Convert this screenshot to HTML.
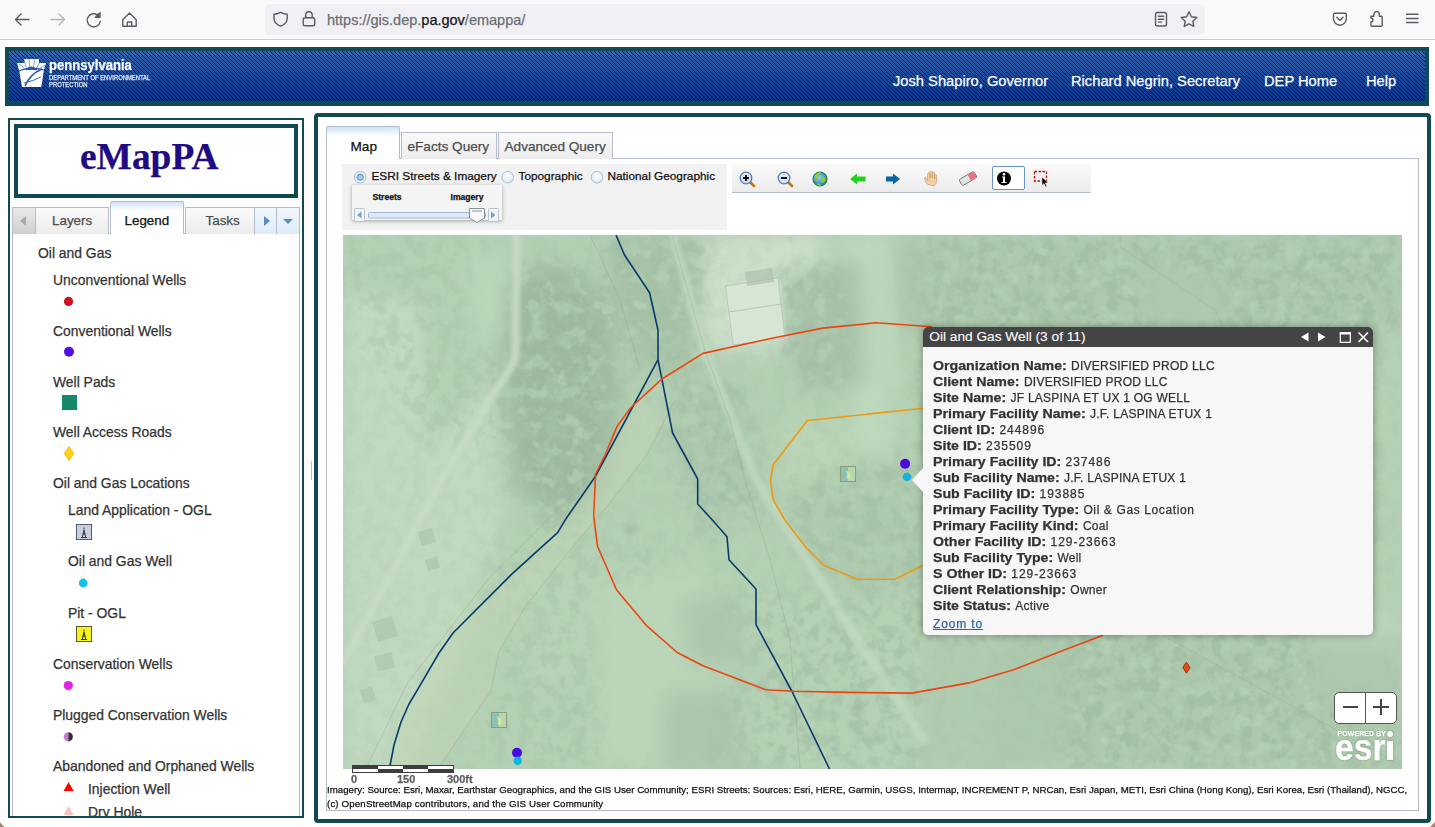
<!DOCTYPE html>
<html><head><meta charset="utf-8">
<style>
*{box-sizing:border-box;margin:0;padding:0}
html,body{width:1435px;height:827px;overflow:hidden;background:#fff;font-family:"Liberation Sans",sans-serif;position:relative}
.a{position:absolute}
.t{position:absolute;white-space:nowrap;line-height:1;-webkit-text-stroke:0.25px currentColor}
/* browser chrome */
#chrome{left:0;top:0;width:1435px;height:40px;background:#f9f9fb;border-bottom:1px solid #cbcbcd}
#url{left:265px;top:3.5px;width:940px;height:31px;background:#f0f0f4;border-radius:5px}
/* header */
#hdr{left:5px;top:47px;width:1424px;height:59px;border:4px solid #114a54;border-bottom-width:5px;
 background:linear-gradient(45deg,rgba(5,10,35,.75) 0 16%,transparent 16% 50%,rgba(5,10,35,.75) 50% 66%,transparent 66% 100%) 0 0/4px 4px,linear-gradient(#3163ab,#0a338c)}
.nav{color:#fff;font-size:14.7px;top:74px}
/* left panel */
#lp{left:8px;top:118px;width:296px;height:700px;border:2px solid #114a54;background:#fff}
#logo{left:14px;top:124px;width:284px;height:74px;border:4px solid #114a54;background:#fff}
#lcont{left:12px;top:233px;width:288px;height:583px;border:1px solid #b5bccb;border-bottom:none;background:#fff}
.ltab{top:207px;height:27px;border:1px solid #b5bccb;border-bottom:none;background:linear-gradient(#fafafa,#ececec);color:#4d4d4d;font-size:13.4px;text-align:center}
.leg{color:#333;font-size:13.9px}
/* right panel */
#rp{left:314px;top:113px;width:1117px;height:710px;border:4px solid #114a54;border-radius:4px;background:#fff}
#rcont{left:326px;top:158px;width:1093px;height:653px;border:1px solid #b5bccb;background:#fff}
.rtab{top:132px;height:27px;border:1px solid #b5bccb;border-bottom:none;background:linear-gradient(#fafafa,#ececec);color:#4d4d4d;font-size:13.6px}
#map{left:343px;top:235px;width:1059px;height:534px;overflow:hidden;background:#afcdae}
/* popup */
#pop{left:923px;top:327px;width:450px;height:308px;background:#f7f7f7;border-radius:5px;box-shadow:0 0 8px rgba(0,0,0,.35)}
#poph{left:0;top:0;width:450px;height:20px;background:#444;border-radius:5px 5px 0 0}
.pl{left:10px;color:#333;font-size:12px;letter-spacing:0.25px}
.pl b{display:inline-block;letter-spacing:0;transform:scaleX(1.18);transform-origin:0 0}
</style></head><body>
<!-- CHROME -->
<div id="chrome" class="a"></div>
<div id="url" class="a"></div>
<svg class="a" style="left:0;top:0" width="1435" height="39">
 <g fill="none" stroke="#5b5b66" stroke-width="1.4" stroke-linecap="round" stroke-linejoin="round">
  <path d="M29 19.5 H15.5 M21 14 L15.5 19.5 L21 25"/>
  <path d="M51 19.5 H64.5 M59 14 L64.5 19.5 L59 25" stroke="#b4b4bc"/>
  <path d="M99.5 17 A6.6 6.6 0 1 0 100.3 21.5"/>
  <path d="M122.8 19.8 L129.5 13 L136.2 19.8 V26.3 H122.8Z M127.3 26.3 V22 H131.7 V26.3"/>
  <path d="M280.6 12.3 C278 13.8 275.5 14.2 274 14.2 V18.5 C274 22.5 277.5 25 280.6 26.2 C283.7 25 287.2 22.5 287.2 18.5 V14.2 C285.7 14.2 283.2 13.8 280.6 12.3Z"/>
  <rect x="303.2" y="17.8" width="11.5" height="8" rx="1.8"/>
  <path d="M305.7 17.8 V15 A3.2 3.2 0 0 1 312.2 15 V17.8"/>
  <rect x="1155.5" y="12.5" width="11" height="13.5" rx="2"/>
  <path d="M1158.3 16.3 H1163.7 M1158.3 19.2 H1163.7 M1158.3 22.1 H1161.5"/>
  <path d="M1189 11.8 L1191.4 16.8 L1196.8 17.5 L1192.8 21.2 L1193.8 26.4 L1189 23.8 L1184.2 26.4 L1185.2 21.2 L1181.2 17.5 L1186.6 16.8Z"/>
  <path d="M1334.5 13.3 H1345.3 A1 1 0 0 1 1346.3 14.3 V18.8 A6.4 6.4 0 0 1 1333.5 18.8 V14.3 A1 1 0 0 1 1334.5 13.3Z M1336.8 17.3 L1339.9 20.3 L1343 17.3"/>
  <path d="M1370.9 16.2 H1373.9 V14.3 A2.7 2.7 0 0 1 1379.3 14.3 V16.2 H1381.2 A1 1 0 0 1 1382.2 17.2 V25.2 A1 1 0 0 1 1381.2 26.2 H1371.9 A1 1 0 0 1 1370.9 25.2 V22 A2 2 0 0 0 1370.9 18Z"/>
  <path d="M1406.5 14.3 H1418 M1406.5 18.5 H1418 M1406.5 22.5 H1418"/>
 </g>
 <path d="M99.5 12 V17.3 H94.5" fill="#5b5b66" stroke="none"/>
 <path d="M100.6 11.8 L100.6 18 L94.5 18Z" fill="#5b5b66"/>
</svg>
<div class="t" style="left:327px;top:12.5px;font-size:14.5px;color:#6d6d74">https://gis.dep.<span style="color:#15141a">pa.gov</span>/emappa/</div>

<!-- HEADER -->
<div id="hdr" class="a"></div>
<svg class="a" style="left:0;top:50px" width="60" height="40">
 <path d="M24.3 9 H39 V13 H46 L43.8 20.7 L41.3 37 H22 L19.2 20.7 L17 13 H24.3Z" fill="#fff"/>
 <g stroke="#2a5aa8" fill="none">
  <path d="M19 21 Q30 16 44 20" stroke-width="1.2"/>
  <path d="M25 36 Q30 24 42 19" stroke-width="1.6"/>
  <path d="M24 33 Q33 31 41 27" stroke-width="0.9"/>
  <path d="M27 20 L24 10 M30 19 L29 9 M33 19 L35 9 M36 19 L40 12 M25 19 L19 14 M38 20 L45 15" stroke-width="0.8" opacity=".7"/>
  <path d="M26 20 Q31 14 37 20" stroke-width="1.2" fill="#2a5aa8"/>
 </g>
</svg>
<div class="t" style="left:48.8px;top:58.2px;font-size:14.3px;font-weight:bold;color:#fff;transform:scaleX(0.915);transform-origin:0 0">pennsylvania</div>
<div class="t" style="left:49.3px;top:75.3px;font-size:6.6px;color:#e8eef8;transform:scaleX(0.89);transform-origin:0 0">DEPARTMENT OF ENVIRONMENTAL</div>
<div class="t" style="left:49.3px;top:82.1px;font-size:6.6px;color:#e8eef8;transform:scaleX(0.89);transform-origin:0 0">PROTECTION</div>
<div class="t nav" style="left:893px">Josh Shapiro, Governor</div>
<div class="t nav" style="left:1071px">Richard Negrin, Secretary</div>
<div class="t nav" style="left:1264px">DEP Home</div>
<div class="t nav" style="left:1366px">Help</div>

<!-- LEFT PANEL -->
<div id="lp" class="a"></div>
<div id="logo" class="a"></div>
<div class="t" style="left:80px;top:138px;font-family:'Liberation Serif',serif;font-weight:bold;font-size:37.4px;color:#1e0a82">eMapPA</div>
<div id="lcont" class="a"></div>
<!-- left tabs -->
<div class="a" style="left:12px;top:207px;width:24px;height:27px;border:1px solid #b5bccb;border-bottom:none;background:linear-gradient(#e9e9e9,#cfcfcf)"></div>
<div class="a" style="left:20px;top:216px;width:0;height:0;border-top:5px solid transparent;border-bottom:5px solid transparent;border-right:6px solid #a9a9a9"></div>
<div class="a ltab" style="left:35px;width:74px"></div>
<div class="t" style="left:52px;top:214.4px;font-size:13.4px;color:#4d4d4d">Layers</div>
<div class="a" style="left:110px;top:201px;width:74px;height:33px;border:1px solid #b5bccb;border-bottom:none;background:linear-gradient(#cfe3f7 0,#fff 9px);border-radius:2px 2px 0 0"></div>
<div class="a" style="left:111px;top:232px;width:72px;height:3px;background:#fff"></div>
<div class="t" style="left:124.5px;top:214.4px;font-size:13.4px;color:#111">Legend</div>
<div class="a ltab" style="left:185px;width:70px"></div>
<div class="t" style="left:205.5px;top:214.4px;font-size:13.4px;color:#4d4d4d">Tasks</div>
<div class="a" style="left:254px;top:207px;width:23px;height:27px;border:1px solid #b5bccb;border-bottom:none;background:linear-gradient(#f2f8fe,#dcebf9)"></div>
<div class="a" style="left:264px;top:216px;width:0;height:0;border-top:5px solid transparent;border-bottom:5px solid transparent;border-left:6px solid #5a8cc0"></div>
<div class="a" style="left:276px;top:207px;width:24px;height:27px;border:1px solid #b5bccb;border-bottom:none;background:linear-gradient(#f2f8fe,#dcebf9)"></div>
<div class="a" style="left:283px;top:219px;width:0;height:0;border-left:5px solid transparent;border-right:5px solid transparent;border-top:5px solid #5a8cc0"></div>
<!-- legend -->
<div class="a" style="left:0;top:0;width:300px;height:816px;overflow:hidden">
<div class="t" style="left:38px;top:246.9px;font-size:13.9px;color:#333">Oil and Gas</div>
<div class="t" style="left:53px;top:273.9px;font-size:13.9px;color:#333">Unconventional Wells</div>
<div class="t" style="left:53px;top:324.7px;font-size:13.9px;color:#333">Conventional Wells</div>
<div class="t" style="left:53px;top:375.7px;font-size:13.9px;color:#333">Well Pads</div>
<div class="t" style="left:53px;top:426.3px;font-size:13.9px;color:#333">Well Access Roads</div>
<div class="t" style="left:53px;top:477.2px;font-size:13.9px;color:#333">Oil and Gas Locations</div>
<div class="t" style="left:68px;top:504.0px;font-size:13.9px;color:#333">Land Application - OGL</div>
<div class="t" style="left:68px;top:555.2px;font-size:13.9px;color:#333">Oil and Gas Well</div>
<div class="t" style="left:68px;top:606.5px;font-size:13.9px;color:#333">Pit - OGL</div>
<div class="t" style="left:53px;top:657.8px;font-size:13.9px;color:#333">Conservation Wells</div>
<div class="t" style="left:53px;top:708.7px;font-size:13.9px;color:#333">Plugged Conservation Wells</div>
<div class="t" style="left:53px;top:760.0px;font-size:13.9px;color:#333">Abandoned and Orphaned Wells</div>
<div class="t" style="left:88px;top:782.6px;font-size:13.9px;color:#333">Injection Well</div>
<div class="t" style="left:88px;top:806.0px;font-size:13.9px;color:#333">Dry Hole</div>
<svg class="a" style="left:0;top:0" width="300" height="816">
 <circle cx="68.5" cy="301.4" r="4.6" fill="#d0101e"/>
 <circle cx="69" cy="351.8" r="5" fill="#5010e8"/>
 <rect x="62" y="395" width="15" height="15" fill="#16896c"/>
 <path d="M69 446.5 L73.8 453.5 L69 460.5 L64.2 453.5Z" fill="#ffd21a" stroke="#f2b000" stroke-width="0.8"/>
 <rect x="76.5" y="524.5" width="15" height="15" fill="#c9cfdb" stroke="#54596a" stroke-width="1"/>
 <path d="M84 527.5 v2 M82.3 537.5 L84 530 L85.7 537.5 M81 537.5 h6 M82.6 534 h2.8" stroke="#33384a" stroke-width="1" fill="none"/>
 <circle cx="83.2" cy="583" r="4.4" fill="#14c0ee"/>
 <rect x="76.5" y="626.5" width="15" height="15" fill="#f6f21c" stroke="#5b5a20" stroke-width="1"/>
 <path d="M84 629.5 v2 M82.3 639.5 L84 632 L85.7 639.5 M81 639.5 h6 M82.6 636 h2.8" stroke="#33331a" stroke-width="1" fill="none"/>
 <circle cx="68.3" cy="685.5" r="4.6" fill="#e620e6"/>
 <path d="M68.3 732.2 A4.6 4.6 0 0 0 68.3 741.4Z" fill="#c87ad8"/>
 <path d="M68.3 732.2 A4.6 4.6 0 0 1 68.3 741.4Z" fill="#3a2a3a"/>
 <path d="M68.6 782 L73.6 791 L63.6 791Z" fill="#ff0000"/>
 <path d="M68.6 806 L73.6 815 L63.6 815Z" fill="#ffc0c0"/>
</svg>
</div>

<div class="a" style="left:311px;top:461px;width:1px;height:19px;background:#b5bccb"></div>
<!-- RIGHT PANEL -->
<div id="rp" class="a"></div>
<div id="rcont" class="a"></div>
<!-- right tabs -->
<div class="a" style="left:326px;top:126px;width:74px;height:33px;border:1px solid #b5bccb;border-bottom:none;background:linear-gradient(#cfe3f7 0,#fff 9px);border-radius:2px 2px 0 0"></div>
<div class="a" style="left:327px;top:157px;width:72px;height:3px;background:#fff"></div>
<div class="t" style="left:350.5px;top:140px;font-size:13.6px;color:#111">Map</div>
<div class="a rtab" style="left:401px;width:96px"></div>
<div class="t" style="left:407.5px;top:140px;font-size:13.6px;color:#4d4d4d">eFacts Query</div>
<div class="a rtab" style="left:498px;width:115px"></div>
<div class="t" style="left:504.5px;top:140px;font-size:13.6px;color:#4d4d4d">Advanced Query</div>
<!-- basemap box -->
<div class="a" style="left:342px;top:164px;width:385px;height:66px;background:#f2f2f2"></div>
<svg class="a" style="left:340px;top:160px" width="400" height="70">
 <defs><radialGradient id="rg1" cx="50%" cy="50%" r="50%"><stop offset="0" stop-color="#bcd8f0"/><stop offset="1" stop-color="#6aa4d4"/></radialGradient>
 <radialGradient id="rg2" cx="50%" cy="40%" r="60%"><stop offset="0" stop-color="#ffffff"/><stop offset="1" stop-color="#dde8f0"/></radialGradient></defs>
 <circle cx="20.2" cy="17.2" r="5.8" fill="#eef3f8" stroke="#a9bfd4" stroke-width="1"/>
 <circle cx="20.2" cy="17.2" r="3.6" fill="url(#rg1)"/>
 <circle cx="167.7" cy="17.2" r="5.8" fill="url(#rg2)" stroke="#a9bfd4" stroke-width="1"/>
 <circle cx="257" cy="17.2" r="5.8" fill="url(#rg2)" stroke="#a9bfd4" stroke-width="1"/>
</svg>
<div class="t" style="left:371.5px;top:170.8px;font-size:11.8px;color:#111">ESRI Streets &amp; Imagery</div>
<div class="t" style="left:518.5px;top:170.8px;font-size:11.8px;color:#111">Topographic</div>
<div class="t" style="left:607.5px;top:170.8px;font-size:11.8px;color:#111">National Geographic</div>
<!-- slider popup -->
<div class="a" style="left:352px;top:185px;width:150px;height:35px;background:#f4f4f4;box-shadow:0 1px 4px rgba(0,0,0,.35)"></div>
<div class="t" style="left:372.5px;top:192.5px;font-size:8.6px;font-weight:bold;color:#111">Streets</div>
<div class="t" style="left:450.5px;top:192.5px;font-size:8.6px;font-weight:bold;color:#111">Imagery</div>
<svg class="a" style="left:350px;top:204px" width="155" height="22">
 <rect x="4.5" y="4.5" width="10" height="13" rx="1" fill="#f4f4f4" stroke="#b8c4d8"/>
 <path d="M7 11 L11.5 7.5 V14.5Z" fill="#7ea0c8"/>
 <rect x="18.5" y="8.5" width="117" height="5.5" rx="1" fill="#dbeafa" stroke="#a8b8d0"/>
 <rect x="138.5" y="4.5" width="10" height="13" rx="1" fill="#f4f4f4" stroke="#b8c4d8"/>
 <path d="M145.5 11 L141 7.5 V14.5Z" fill="#7ea0c8"/>
 <path d="M119.5 4.5 H134.5 V14 L127 18.5 L119.5 14Z" fill="#f8f8fa" stroke="#8890a0"/>
 <path d="M122 7 H132" stroke="#8890a0"/>
</svg>
<!-- toolbar -->
<div class="a" style="left:732px;top:164px;width:359px;height:29px;background:linear-gradient(#fafafa,#ebebeb);border-bottom:1px solid #b3bcca"></div>
<div class="a" style="left:992px;top:166px;width:33px;height:24px;background:#fff;border:1px solid #6a93c8;border-radius:2px"></div>
<svg class="a" style="left:732px;top:164px" width="360" height="29">
 <defs>
  <linearGradient id="lens" x1="0" y1="0" x2="0" y2="1"><stop offset="0" stop-color="#f4f8ff"/><stop offset="1" stop-color="#c4d8f4"/></linearGradient>
  <radialGradient id="globe" cx="45%" cy="40%" r="60%"><stop offset="0" stop-color="#8fd0ff"/><stop offset="1" stop-color="#2a7ac8"/></radialGradient>
 </defs>
 <!-- zoom in -->
 <line x1="18" y1="18" x2="22" y2="22" stroke="#c07818" stroke-width="2.6" stroke-linecap="round"/>
 <circle cx="14" cy="14" r="5.8" fill="url(#lens)" stroke="#4a78c0" stroke-width="1.3"/>
 <path d="M11 14 H17 M14 11 V17" stroke="#000" stroke-width="1.8"/>
 <!-- zoom out -->
 <line x1="56" y1="18" x2="60" y2="22" stroke="#c07818" stroke-width="2.6" stroke-linecap="round"/>
 <circle cx="52" cy="14" r="5.8" fill="url(#lens)" stroke="#4a78c0" stroke-width="1.3"/>
 <path d="M49 14 H55" stroke="#000" stroke-width="1.8"/>
 <!-- globe -->
 <circle cx="88" cy="15" r="7" fill="url(#globe)" stroke="#1e8a3a" stroke-width="1.2"/>
 <path d="M82.5 12 q2 -4 6 -3.5 q0 3 -3 3.5 q1 3 -1 5 q-2 -1 -2 -5Z M88.5 12.5 q4 -1 5 3 q-1 4 -4 3.5 q1 -3 -1 -6.5Z M85 19.5 q3 -1 4 2 q-3 1 -4 -2Z" fill="#8ccc3a"/>
 <!-- back green -->
 <path d="M118 15 L125 9.5 V12.5 H133.5 V17.5 H125 V20.5Z" fill="#1ed21e"/>
 <!-- forward blue -->
 <path d="M168 15 L161 9.5 V12.5 H154 V17.5 H161 V20.5Z" fill="#0a64a6"/>
 <!-- hand -->
 <g transform="translate(198.7 14.3) scale(0.78) translate(-197 -13.3)">
 <path d="M193 21 q-3 -3 -4 -7 q0 -2 2 -1 l2 3 v-8 q0 -2 1.5 -2 q1.5 0 1.5 2 v5 v-7 q0 -2 1.5 -2 q1.5 0 1.5 2 v7 v-6 q0 -2 1.5 -2 q1.5 0 1.5 2 v7 v-4 q0 -1.5 1.3 -1.5 q1.3 0 1.3 1.5 v6 q0 4 -3 7Z" fill="#f2d0a4" stroke="#c49a68" stroke-width="0.8"/>
 </g>
 <!-- eraser -->
 <g transform="rotate(-30 236 14.5)">
  <rect x="227.5" y="11" width="17" height="7" rx="1.5" fill="#e4e4e4" stroke="#6e6e6e" stroke-width="0.8"/>
  <path d="M237.5 11.4 H243 A1.2 1.2 0 0 1 244.2 12.6 V16.4 A1.2 1.2 0 0 1 243 17.6 H237.5Z" fill="#f07080"/>
 </g>
 <!-- info -->
 <circle cx="272" cy="14.5" r="7" fill="#000"/>
 <path d="M270 12.5 H273 V18 H274.5 V19 H269.5 V18 H271 V13.5 H270Z" fill="#fff"/>
 <circle cx="272" cy="10.3" r="1.3" fill="#fff"/>
 <!-- select -->
 <rect x="302.5" y="7.5" width="12" height="9.5" fill="none" stroke="#c01010" stroke-width="1.3" stroke-dasharray="2.5 1.5"/>
 <path d="M310 13 L310 21.5 L312 19.6 L313.5 22.8 L314.8 22.2 L313.3 19 L316.2 18.8Z" fill="#000" stroke="#fff" stroke-width="0.5"/>
</svg>
<div id="map" class="a">
<svg class="a" style="left:0;top:0" width="1059" height="534" viewBox="343 235 1059 534">
 <defs>
  <filter id="b12" x="-30%" y="-30%" width="160%" height="160%"><feGaussianBlur stdDeviation="10"/></filter>
  <filter id="b6" x="-30%" y="-30%" width="160%" height="160%"><feGaussianBlur stdDeviation="5"/></filter>
  <filter id="b3" x="-20%" y="-20%" width="140%" height="140%"><feGaussianBlur stdDeviation="2"/></filter>
  <filter id="b3s" x="-20%" y="-20%" width="140%" height="140%"><feGaussianBlur stdDeviation="0.7"/></filter>
  <filter id="noiseD" x="0" y="0" width="100%" height="100%" color-interpolation-filters="sRGB">
   <feTurbulence type="fractalNoise" baseFrequency="0.075" numOctaves="4" seed="3" result="n"/>
   <feColorMatrix in="n" type="matrix" values="0 0 0 0 0.64  0 0 0 0 0.75  0 0 0 0 0.65  5 0 0 0 -2.2"/>
  </filter>
  <filter id="noiseL" x="0" y="0" width="100%" height="100%" color-interpolation-filters="sRGB">
   <feTurbulence type="fractalNoise" baseFrequency="0.07" numOctaves="3" seed="11" result="n"/>
   <feColorMatrix in="n" type="matrix" values="0 0 0 0 0.72  0 0 0 0 0.84  0 0 0 0 0.72  5 0 0 0 -2.6"/>
  </filter>
  <filter id="noiseS" x="0" y="0" width="100%" height="100%" color-interpolation-filters="sRGB">
   <feTurbulence type="fractalNoise" baseFrequency="0.02" numOctaves="2" seed="5" result="n"/>
   <feColorMatrix in="n" type="matrix" values="0 0 0 0 0.70  0 0 0 0 0.80  0 0 0 0 0.70  3 0 0 0 -1.5"/>
  </filter>
  <mask id="fm" maskUnits="userSpaceOnUse" x="343" y="235" width="1059" height="534">
   <rect x="343" y="235" width="1059" height="534" fill="#222"/>
   <g filter="url(#b12)">
    <polygon points="504.5,273.8 556.2,254.4 614.3,293.1 620.8,396.5 601.4,506.3 556.2,538.6 511.0,480.5 498.0,364.2" fill="#fff"/>
    <polygon points="601.4,235.0 704.8,235.0 691.8,364.2 646.6,377.1 614.3,312.5" fill="#fff"/>
    <polygon points="782.3,273.8 859.8,260.8 866.3,383.6 808.1,390.0 782.3,344.8" fill="#fff"/>
    <polygon points="795.2,480.5 923.1,448.2 923.1,596.8 834.0,583.8 782.3,525.7" fill="#bbb"/>
    <polygon points="678.9,364.2 743.5,383.6 769.4,506.3 704.8,538.6 666.0,448.2" fill="#ddd"/>
    <polygon points="491.6,545.1 653.1,538.6 756.4,596.8 756.4,769.2 491.6,769.2" fill="#777"/>
    <polygon points="427.0,235.0 504.5,235.0 504.5,364.2 433.4,364.2" fill="#bbb"/>
    <polygon points="343.0,235.0 504.5,235.0 504.5,448.2 420.5,448.2 343.0,293.1" fill="#666"/>
    <polygon points="756.4,596.8 923.1,596.8 923.1,769.2 756.4,769.2" fill="#bbb"/>
    <polygon points="923,235 1402,235 1402,330 1373,330 1373,640 1402,640 1402,769 1063,769 1063,640 923,640" fill="#fff"/>
   </g>
   <g filter="url(#b12)" fill="#000">
    <polygon points="1143,262 1223,290 1228,330 1150,330"/>
    <polygon points="840,235 888,235 895,455 852,455"/>
    <polygon points="466,250 512,250 512,340 470,340"/>
    <polygon points="590,585 700,560 740,640 700,769 600,769"/>
    <polygon points="1310,626 1402,600 1402,690 1320,700"/>
   </g>
  </mask>
 </defs>
 <rect x="343" y="235" width="1059" height="534" fill="#b5d1b4"/>
 <rect x="343" y="235" width="1059" height="534" filter="url(#noiseS)" opacity=".35"/>
 <g filter="url(#b12)">
  <polygon points="343.0,293.1 420.5,299.6 427.0,493.4 343.0,525.7" fill="#c0dac0" opacity="1"/>
  <polygon points="343.0,525.7 491.6,383.6 504.5,525.7 414.1,769.2 343.0,769.2" fill="#c0d9bf" opacity="1"/>
  <polygon points="682.1,235.0 824.3,235.0 824.3,273.8 808.1,351.3 708.0,351.3" fill="#cce0ca" opacity="1"/>
  <polygon points="782.3,422.3 846.9,428.8 834.0,506.3 782.3,493.4" fill="#bed6b8" opacity="0.8"/>
  <polygon points="504.5,570.9 614.3,558.0 653.1,622.6 536.8,700.1" fill="#b9d3b7" opacity="0.6"/>
  <polygon points="1143,262 1223,290 1228,330 1150,330" fill="#bbd7bb" opacity="1"/>
  <polygon points="840,235 888,235 895,455 852,455" fill="#bdd8bc" opacity="1"/>
  <polygon points="466,250 512,250 512,340 470,340" fill="#bbd8bb" opacity="0.8"/>
  <polygon points="590,585 700,560 740,640 700,769 600,769" fill="#bbd6b9" opacity="0.8"/>
  <polygon points="1310,626 1402,600 1402,690 1320,700" fill="#bbd6bb" opacity="0.8"/>
  <polygon points="511.0,280.2 556.2,260.8 607.9,293.1 620.8,396.5 601.4,493.4 556.2,525.7 514.2,480.5 501.3,364.2" fill="#9db89e" opacity="1"/>
  <polygon points="601.4,235.0 704.8,235.0 691.8,364.2 646.6,377.1 614.3,312.5" fill="#a6c0a6" opacity="0.9"/>
  <polygon points="782.3,273.8 859.8,260.8 866.3,383.6 808.1,390.0 782.3,344.8" fill="#a6c0a6" opacity="0.9"/>
  <polygon points="795.2,480.5 923.1,461.1 923.1,596.8 834.0,583.8 782.3,525.7" fill="#aac5aa" opacity="0.6"/>
  <polygon points="678.9,364.2 743.5,383.6 769.4,506.3 704.8,538.6 666.0,448.2" fill="#aac4aa" opacity="0.7"/>
  <polygon points="680,600 735,595 745,665 690,665" fill="#a6c1a6" opacity="0.7"/>
  <polygon points="665,690 735,690 745,769 660,769" fill="#a6c1a6" opacity="0.7"/>
  <polygon points="1000,600 1063,600 1100,700 1063,769 990,769" fill="#a9c4a9" opacity="0.6"/>
  <polygon points="923,235 1402,235 1402,330 923,330" fill="#abc6ab" opacity="0.8"/>
  <polygon points="893,240 930,240 930,330 897,330" fill="#a8c3a8" opacity="0.7"/>
  <polygon points="1063,640 1402,640 1402,769 1063,769" fill="#abc6ab" opacity="0.8"/>
  <polygon points="923,640 1063,640 1063,769 923,769" fill="#adc8ad" opacity="0.6"/>
 </g>
 <rect x="343" y="235" width="1059" height="534" filter="url(#noiseD)" mask="url(#fm)" opacity=".95"/>
 <rect x="343" y="235" width="1059" height="534" filter="url(#noiseL)" mask="url(#fm)" opacity=".5"/>
 <g fill="none" filter="url(#b3)" stroke-linecap="round">
  <polyline points="517,235 515,360 490,400 445,474 343,663" stroke="#c6dcc4" stroke-width="8" opacity=".9"/>
  <polyline points="672.5,235.0 704.8,351.3 756.4,480.5 846.9,622.6 923.1,738.9" stroke="#c3dac1" stroke-width="9" opacity=".75"/>
  <polyline points="882,235 888,300 895,380" stroke="#bcd8bc" stroke-width="16" opacity=".5"/>
 </g>
 <polygon points="640,395 595,477 566,518.7 511.5,574.4 453,633 417.4,689.5 398.6,729 389.4,769 438,769 491.1,690.5 498.7,652.5 525.3,606.9 567.1,553.7 608.9,504.4 646.9,455 660,420" fill="#c2d6b5" opacity=".5" filter="url(#b3)"/>
 <g filter="url(#b3)">
  <polygon points="725,286 778,278 785,338 733,345" fill="#d6e6d4"/>

  <rect x="850" y="704" width="14" height="12" fill="#9fb79f" opacity=".5"/>
  <rect x="625" y="525" width="12" height="10" fill="#a2b9a2" opacity=".6"/>
 </g>
 <polygon points="725.5,286 778,278 785,338 733,345" fill="#d6e5d4" stroke="#afc2ae" stroke-width=".7" filter="url(#b3s)"/>
 <polygon points="745,272 772,268 774,282 747,286" fill="#a9bca9" opacity=".6"/>
 <path d="M729 312 L781 304" stroke="#b5c8b4" stroke-width="1"/>
 <g stroke="#8f9e8c" stroke-width="0.6" fill="none" opacity=".5">
  <path d="M1120 235 L1120 247 L1215 310 L1223 326"/>
  <path d="M1162 635 L1402 766"/>
 </g>
 <g stroke="#8a9a86" stroke-width="0.6" fill="none" opacity=".5">
  <polyline points="438,769 491.1,690.5 498.7,652.5 525.3,606.9 567.1,553.7 608.9,504.4 646.9,455 675,400"/>
  <polyline points="586,481.6 487.3,580.3 407.6,682.9 365.8,769"/>
  <polyline points="590,235 620,300 640,370"/>
  <polyline points="672,235 705,351 730,420 745,480 770,560 790,640 800,769"/>
 </g>
 <g fill="#a3b7a4" opacity=".4" filter="url(#b3s)">
  <polygon points="372,622 392,616 398,636 378,642"/>
  <polygon points="374,656 392,652 395,668 377,671"/>
  <polygon points="360,690 372,686 376,700 364,703"/>
  <polygon points="418,532 432,528 436,542 422,546"/>
  <polygon points="425,560 437,556 440,568 428,571"/>
 </g>
 <!-- blue lines -->
 <g stroke="#083b6c" stroke-width="1.6" fill="none" stroke-linejoin="round">
  <path d="M616 235 L624.5 255 L649.6 292.8 L658 330 L658 359.7 L672.6 433 L697.7 479 L697.7 504 L712.4 520 L727 536.7 L729 559.7 L756 589 L756 624.6 L792 691.5 L829.5 769"/>
  <path d="M658 359.7 L595 477 L566 518.7 L557.6 532.6 L511.5 574.4 L453 633 L439 653 L418.6 687.9 L409 704 L401 722 L394 745 L389.4 769"/>
 </g>
 <!-- red circle -->
 <path d="M932 326.8 L876 322.8 L822.7 328.1 L769.5 338.8 L703 353.4 L662.3 378.7 L630.4 408 L617 426.6 L605.1 455 L595.6 474 L593.7 515.8 L597.5 546.2 L616.5 589.8 L646.8 625.9 L677.2 652.5 L703 665.8 L765.7 689.7 L794 691.2 L847.3 692.4 L911.9 693.1 L968.9 682.9 L1014.4 669.6 L1063 650.6 L1103 635.3" stroke="#ee4410" stroke-width="1.6" fill="none" stroke-linejoin="round"/>
 <!-- orange circle -->
 <path d="M923 408.3 L807.3 420.5 L773 464.9 L770.5 480.2 L773 499.2 L784.5 519.5 L806 547.5 L823.8 565.3 L856.8 579.2 L895 579.2 L923 565.3" stroke="#ee9a10" stroke-width="1.6" fill="none" stroke-linejoin="round"/>
 <!-- symbols -->
 <rect x="840.5" y="466.5" width="15" height="15" fill="#b8d6b0" stroke="#8c9c78" stroke-width="1"/>
 <path d="M841 467 H848 V481 H841Z" fill="#8ec0b4"/>
 <path d="M846 470 q2 4 1 9 q3 0 4 -4 q-2 -3 -5 -5Z" fill="#d2ea9a"/>
 <rect x="491.5" y="712.5" width="15" height="15" fill="#b8d6b0" stroke="#8c9c78" stroke-width="1"/>
 <path d="M492 713 H499 V727 H492Z" fill="#8ec0b4"/>
 <path d="M497 716 q2 4 1 9 q3 0 4 -4 q-2 -3 -5 -5Z" fill="#d2ea9a"/>
 <circle cx="905.1" cy="463.8" r="5" fill="#4a08e0"/>
 <circle cx="907" cy="476.9" r="4.2" fill="#10b4e4" stroke="#7a9a9a" stroke-width=".4"/>
 <circle cx="517" cy="752.8" r="5" fill="#4a08e0"/>
 <circle cx="517.7" cy="760.7" r="4.2" fill="#10b4e4"/>
 <path d="M1186.4 662 L1190 667.6 L1186.4 673.2 L1182.8 667.6Z" fill="#e84a14" stroke="#7a2a10" stroke-width=".8"/>
</svg>
</div>


<!-- scale bar -->
<svg class="a" style="left:350px;top:763px" width="110" height="24">
 <rect x="2.5" y="2.5" width="101" height="7" fill="#fff" stroke="#3d3d3d" stroke-width="1"/>
 <rect x="3" y="3" width="25" height="3" fill="#3d3d3d"/>
 <rect x="53" y="3" width="25" height="3" fill="#3d3d3d"/>
 <rect x="28" y="6" width="25" height="3.5" fill="#3d3d3d"/>
 <rect x="78" y="6" width="25" height="3.5" fill="#3d3d3d"/>
</svg>
<div class="t" style="left:351px;top:773.5px;font-size:11px;font-weight:bold;color:#5e5e5e">0</div>
<div class="t" style="left:397px;top:773.5px;font-size:11px;font-weight:bold;color:#5e5e5e">150</div>
<div class="t" style="left:447px;top:773.5px;font-size:11px;font-weight:bold;color:#5e5e5e">300ft</div>
<!-- attribution -->
<div class="t" style="left:327px;top:785.3px;font-size:9.7px;color:#111">Imagery: Source: Esri, Maxar, Earthstar Geographics, and the GIS User Community; ESRI Streets: Sources: Esri, HERE, Garmin, USGS, Intermap, INCREMENT P, NRCan, Esri Japan, METI, Esri China (Hong Kong), Esri Korea, Esri (Thailand), NGCC,</div>
<div class="t" style="left:327px;top:798.5px;font-size:9.7px;color:#111;letter-spacing:0.15px">(c) OpenStreetMap contributors, and the GIS User Community</div>
<!-- zoom control -->
<div class="a" style="left:1334px;top:692px;width:63px;height:32px;background:#fff;border:1px solid #555;border-radius:5px"></div>
<div class="a" style="left:1365px;top:693px;width:1px;height:30px;background:#555"></div>
<div class="a" style="left:1343px;top:706px;width:15px;height:2px;background:#444"></div>
<div class="a" style="left:1373px;top:706px;width:16px;height:2px;background:#444"></div>
<div class="a" style="left:1380px;top:699px;width:2px;height:16px;background:#444"></div>
<!-- esri logo -->
<div class="t" style="left:1337.5px;top:731.2px;font-size:6.9px;font-weight:bold;color:#fff;letter-spacing:0.15px;text-shadow:0 0 2px rgba(40,60,40,.4)">POWERED BY</div>
<div class="a" style="left:1386.8px;top:730.8px;width:6.4px;height:6.4px;border-radius:50%;background:#fff;box-shadow:0 0 2px rgba(40,60,40,.4)"></div>
<div class="t" style="left:1334.8px;top:729.6px;font-size:36px;font-weight:bold;color:#fff;transform:scaleX(0.935);transform-origin:0 0;text-shadow:0 0 2px rgba(40,60,40,.45)">esr</div>
<div class="a" style="left:1387.3px;top:740.5px;width:5.4px;height:19.4px;background:#fff;box-shadow:0 0 2px rgba(40,60,40,.45)"></div>

<!-- POPUP -->
<div id="pop" class="a">
 <div id="poph" class="a"></div>
 <div class="t" style="left:6.3px;top:3.0px;font-size:13.7px;color:#fff;-webkit-text-stroke:0.1px #fff">Oil and Gas Well (3 of 11)</div>
 <svg class="a" style="left:370px;top:0" width="80" height="20">
  <path d="M15.5 5.5 L8 10 L15.5 14.5Z" fill="#fff"/>
  <path d="M25 5.5 L32.5 10 L25 14.5Z" fill="#fff"/>
  <rect x="47.3" y="5.8" width="10" height="9.5" fill="none" stroke="#fff" stroke-width="1.2"/>
  <rect x="46.8" y="5.3" width="11" height="2.2" fill="#fff"/>
  <path d="M65.5 5.5 L75 15 M75 5.5 L65.5 15" stroke="#fff" stroke-width="1.7"/>
 </svg>
<div class="t pl" style="top:33.3px"><b>Organization Name:</b></div><div class="t pl" style="top:33.3px;left:148.1px;">DIVERSIFIED PROD LLC</div>
<div class="t pl" style="top:49.3px"><b>Client Name:</b></div><div class="t pl" style="top:49.3px;left:100.9px;">DIVERSIFIED PROD LLC</div>
<div class="t pl" style="top:65.3px"><b>Site Name:</b></div><div class="t pl" style="top:65.3px;left:87.5px;">JF LASPINA ET UX 1 OG WELL</div>
<div class="t pl" style="top:81.3px"><b>Primary Facility Name:</b></div><div class="t pl" style="top:81.3px;left:167.0px;">J.F. LASPINA ETUX 1</div>
<div class="t pl" style="top:97.3px"><b>Client ID:</b></div><div class="t pl" style="top:97.3px;left:76.5px;letter-spacing:0.95px;">244896</div>
<div class="t pl" style="top:113.3px"><b>Site ID:</b></div><div class="t pl" style="top:113.3px;left:63.1px;letter-spacing:0.95px;">235509</div>
<div class="t pl" style="top:129.3px"><b>Primary Facility ID:</b></div><div class="t pl" style="top:129.3px;left:142.6px;letter-spacing:0.95px;">237486</div>
<div class="t pl" style="top:145.3px"><b>Sub Facility Name:</b></div><div class="t pl" style="top:145.3px;left:141.0px;">J.F. LASPINA ETUX 1</div>
<div class="t pl" style="top:161.3px"><b>Sub Facility ID:</b></div><div class="t pl" style="top:161.3px;left:116.6px;letter-spacing:0.95px;">193885</div>
<div class="t pl" style="top:177.3px"><b>Primary Facility Type:</b></div><div class="t pl" style="top:177.3px;left:160.4px;letter-spacing:0.62px">Oil &amp; Gas Location</div>
<div class="t pl" style="top:193.3px"><b>Primary Facility Kind:</b></div><div class="t pl" style="top:193.3px;left:159.9px;">Coal</div>
<div class="t pl" style="top:209.3px"><b>Other Facility ID:</b></div><div class="t pl" style="top:209.3px;left:127.6px;letter-spacing:0.95px;">129-23663</div>
<div class="t pl" style="top:225.3px"><b>Sub Facility Type:</b></div><div class="t pl" style="top:225.3px;left:134.4px;">Well</div>
<div class="t pl" style="top:241.3px"><b>S Other ID:</b></div><div class="t pl" style="top:241.3px;left:88.3px;letter-spacing:0.95px;">129-23663</div>
<div class="t pl" style="top:257.3px"><b>Client Relationship:</b></div><div class="t pl" style="top:257.3px;left:147.3px;">Owner</div>
<div class="t pl" style="top:273.3px"><b>Site Status:</b></div><div class="t pl" style="top:273.3px;left:92.2px;">Active</div>
<div class="t pl" style="top:291.4px;color:#2d64a8;text-decoration:underline;letter-spacing:0.85px">Zoom to</div>
</div>
<div class="a" style="left:912px;top:468px;width:0;height:0;border-top:12px solid transparent;border-bottom:12px solid transparent;border-right:11.5px solid #f7f7f7"></div>
<svg class="a" style="left:0;top:815px" width="12" height="12"><path d="M0 7.5 L4.5 12 L0 12Z" fill="#9a8a6a"/></svg>
<svg class="a" style="left:1423px;top:815px" width="12" height="12"><path d="M12 7 L7 12 L12 12Z" fill="#9a8a6a"/></svg>
</body></html>
